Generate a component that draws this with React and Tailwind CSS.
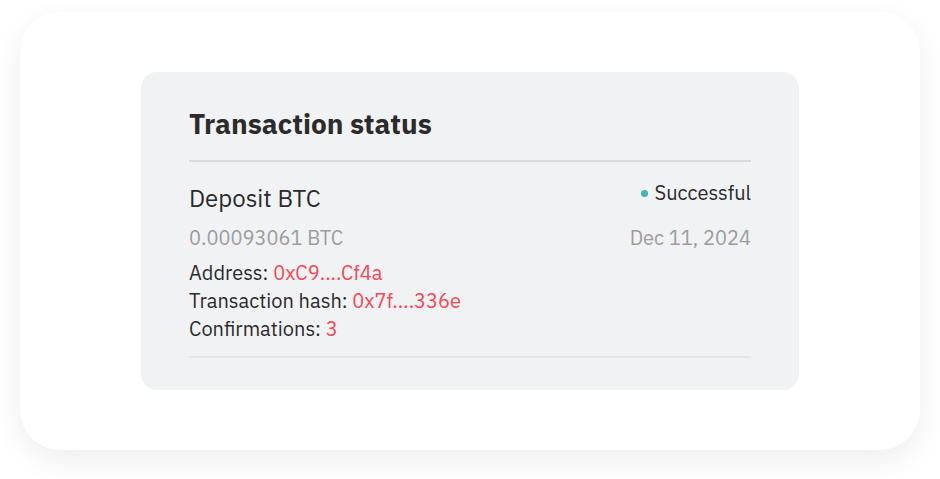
export default function App() {
  return (
    <div className="min-h-screen bg-white pt-[12px] px-[20px] font-['IBM_Plex_Sans','Roboto',sans-serif]">
      <div className="h-[438px] rounded-[40px] bg-white shadow-[0_10px_30px_rgba(0,0,0,0.07)] pt-[60px] flex justify-center">
        <div className="w-[658px] h-[318px] rounded-[16px] bg-[#f1f2f4] px-[48px] pt-[36px]">
          <h2 className="text-[28px] leading-[32px] font-bold text-[#2b2b2b]">Transaction status</h2>
          <div className="mt-[20px] h-[2px] bg-[#d9dadd]" />

          <div className="mt-[17px] flex items-start justify-between">
            <div className="mt-[5px] text-[24px] leading-[28px] text-[#2b2b2b]">Deposit BTC</div>
            <div className="flex items-center gap-[7px] text-[20px] leading-[28px] text-[#2b2b2b]">
              <span className="w-[7px] h-[7px] rounded-full bg-[#40b4ae]" />
              Successful
            </div>
          </div>

          <div className="mt-[12px] flex justify-between text-[20px] leading-[28px] text-[#9c9c9c]">
            <span>0.00093061 BTC</span>
            <span>Dec 11, 2024</span>
          </div>

          <div className="mt-[7px] text-[20px] leading-[28px] text-[#2b2b2b]">
            <div>
              Address: <span className="text-[#f94652]">0xC9....Cf4a</span>
            </div>
            <div>
              Transaction hash: <span className="text-[#f94652]">0x7f....336e</span>
            </div>
            <div>
              Confirmations: <span className="text-[#f94652]">3</span>
            </div>
          </div>

          <div className="mt-[13px] h-[2px] bg-[#e4e5e7]" />
        </div>
      </div>
    </div>
  );
}
